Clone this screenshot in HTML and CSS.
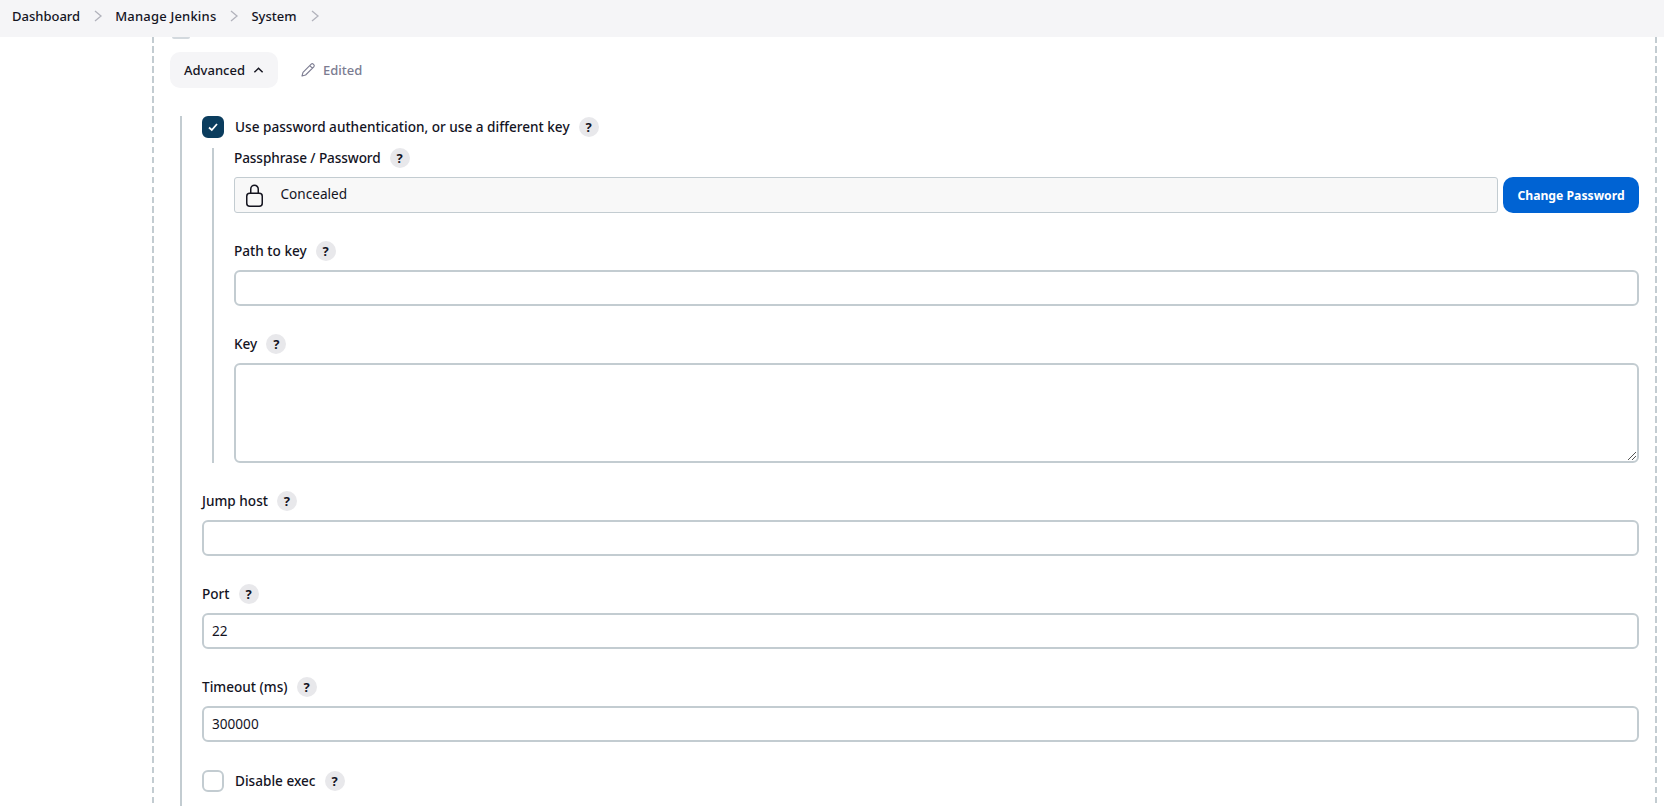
FILE: index.html
```html
<!DOCTYPE html>
<html lang="en">
<head>
<meta charset="utf-8">
<title>System - Jenkins</title>
<link rel="stylesheet" href="styles.css">
</head>
<body>
<header class="crumbs">
  <a class="crumb">Dashboard</a>
  <svg class="sep" viewBox="0 0 10 14"><path d="M2 2l6 5-6 5"/></svg>
  <a class="crumb wide">Manage Jenkins</a>
  <svg class="sep" viewBox="0 0 10 14"><path d="M2 2l6 5-6 5"/></svg>
  <a class="crumb">System</a>
  <svg class="sep" viewBox="0 0 10 14"><path d="M2 2l6 5-6 5"/></svg>
</header>
<main class="page">
  <div class="repeated">
    <div class="peek"></div>
    <div class="adv-row">
      <button class="adv-btn">Advanced
        <svg class="chev" viewBox="0 0 12 8"><path d="M1.500 6.500 6 2l4.500 4.500"/></svg>
      </button>
      <span class="edited">
        <svg class="pencil" viewBox="0 0 16 16"><path d="M11.200 2.200a1.500 1.500 0 0 1 2.100 0l.5.5a1.500 1.500 0 0 1 0 2.100L5.600 13 2 14l1-3.600zM9.800 3.600l2.600 2.600"/></svg>
        Edited
      </span>
    </div>
    <section class="advanced">
      <div class="check-row">
        <span class="box on"><svg viewBox="0 0 12 12"><path d="M2 6.500 4.800 9 10 3"/></svg></span>
        <label class="check-label">Use password authentication, or use a different key</label>
        <span class="help">?</span>
      </div>
      <div class="nested">
        <div class="label-row top"><label class="tight">Passphrase / Password</label><span class="help">?</span></div>
        <div class="concealed-row">
          <div class="concealed">
            <svg class="lock" viewBox="0 0 17 23"><path d="M4.750 9.250V5a3.750 3.750 0 0 1 7.500 0v4.250"/><rect x=".75" y="9.250" width="15.500" height="13" rx="3"/></svg>
            <span class="concealed-text">Concealed</span>
          </div>
          <button class="primary">Change Password</button>
        </div>
        <div class="label-row"><label>Path to key</label><span class="help">?</span></div>
        <div class="input"></div>
        <div class="label-row"><label>Key</label><span class="help">?</span></div>
        <div class="textarea">
          <svg class="grip" viewBox="0 0 8 8"><path d="M0 8 8 0M4 8l4-4"/></svg>
        </div>
      </div>
      <div class="label-row"><label>Jump host</label><span class="help">?</span></div>
      <div class="input"></div>
      <div class="label-row"><label>Port</label><span class="help">?</span></div>
      <div class="input">22</div>
      <div class="label-row"><label>Timeout (ms)</label><span class="help">?</span></div>
      <div class="input">300000</div>
      <div class="check-row last">
        <span class="box"></span>
        <label class="check-label">Disable exec</label>
        <span class="help">?</span>
      </div>
    </section>
  </div>
</main>
</body>
</html>
```
FILE: styles.css
```css
* { box-sizing: border-box; }
html, body { margin: 0; height: 806px; overflow: hidden; background: #fff; }
body { font-family: "Noto Sans", sans-serif; font-size: 13.6px; color: #14141f; }

.crumbs {
  height: 37px;
  background: #f5f5f7;
  display: flex;
  align-items: center;
  padding: 0 0 6px 12px;
}
.crumb { font-weight: 500; font-size: 13px; color: #14141f; }
.crumb.wide { letter-spacing: .2px; }
.sep { width: 10px; height: 14px; margin: 0 12px 0 13px; fill: none; stroke: #b2b3bc; stroke-width: 1.3; }

.page { padding: 0 7px 0 152px; height: 769px; overflow: hidden; }
.repeated {
  height: 769px;
  --dash: repeating-linear-gradient(#c3ccd1 0 6px, transparent 6px 9.5px, #c3ccd1 9.5px 10px);
  background: var(--dash) left top / 2px 100% no-repeat, var(--dash) right top / 2px 100% no-repeat;
  padding: 0 18px 0 18px;
}
.peek {
  width: 18px; height: 2px; margin-left: 2px;
  background: #d3d9de;
  border-radius: 0 0 6px 6px;
}
.adv-row { display: flex; align-items: center; margin-top: 13px; }
.adv-btn {
  height: 36px; width: 108px;
  border: 0; border-radius: 10px;
  background: #f5f5f7;
  font: 500 13px "Noto Sans", sans-serif;
  color: #14141f;
  display: flex; align-items: center; justify-content: center; gap: 8px;
  padding: 0;
}
.chev { width: 11px; height: 8px; fill: none; stroke: #14141f; stroke-width: 1.6; }
.edited { display: flex; align-items: center; gap: 7px; margin-left: 22px; font-size: 13px; font-weight: 500; color: #7c7c91; }
.pencil { width: 16px; height: 16px; fill: none; stroke: #7c7c91; stroke-width: 1.1; stroke-linejoin: round; }

.advanced { margin: 28px 0 0 10px; border-left: 2px solid #c3ccd1; padding-left: 20px; height: 700px; }
.check-row { display: flex; align-items: center; height: 22px; }
.box {
  width: 22px; height: 22px; border-radius: 6px;
  border: 2px solid #c3ccd1;
  display: flex; align-items: center; justify-content: center;
  flex: none;
}
.box.on { background: #0b3d5e; border-color: #0b3d5e; }
.box svg { width: 12px; height: 12px; fill: none; stroke: #fff; stroke-width: 1.8; }
.check-label { font-weight: 500; margin-left: 11px; padding-bottom: 2px; color: #14141f; }
.help {
  width: 20px; height: 20px; border-radius: 50%;
  background: #e8e8eb;
  font-weight: 700; font-size: 13px;
  display: flex; align-items: center; justify-content: center;
  margin-left: 9px;
  flex: none;
}
.nested { margin: 10px 0 0 10px; border-left: 2px solid #c3ccd1; padding-left: 20px; }
.label-row { display: flex; align-items: center; height: 20px; margin: 28px 0 9px; font-weight: 500; }
.label-row label { padding-bottom: 2px; }
.label-row label.tight { letter-spacing: -.1px; }
.label-row.top { margin: 0 0 9px; }
.input, .textarea {
  height: 36px;
  border: 2px solid #c3ccd1;
  border-radius: 6px;
  padding: 0 8px 2px;
  display: flex; align-items: center;
  background: #fff;
}
.textarea { height: 100px; position: relative; }
.grip { position: absolute; right: 1px; bottom: 1px; width: 8px; height: 8px; stroke: #555; stroke-width: 1; }
.concealed-row { display: flex; gap: 5px; }
.concealed {
  flex: 1; height: 36px;
  border: 1px solid #c3ccd1; border-radius: 3px;
  background: #f8f8f8;
  display: flex; align-items: center;
  padding: 0 0 0 10.5px;
}
.lock { width: 17px; height: 23px; fill: none; stroke: #14141f; stroke-width: 1.5; margin-right: 18px; }
.concealed-text { padding-bottom: 4px; }
.primary {
  width: 136px; height: 36px;
  border: 0; border-radius: 10px;
  background: #0063d3; color: #fff;
  font: 700 12.2px "Noto Sans", sans-serif;
  padding: 0;
}
.check-row.last { margin-top: 28px; }
```
